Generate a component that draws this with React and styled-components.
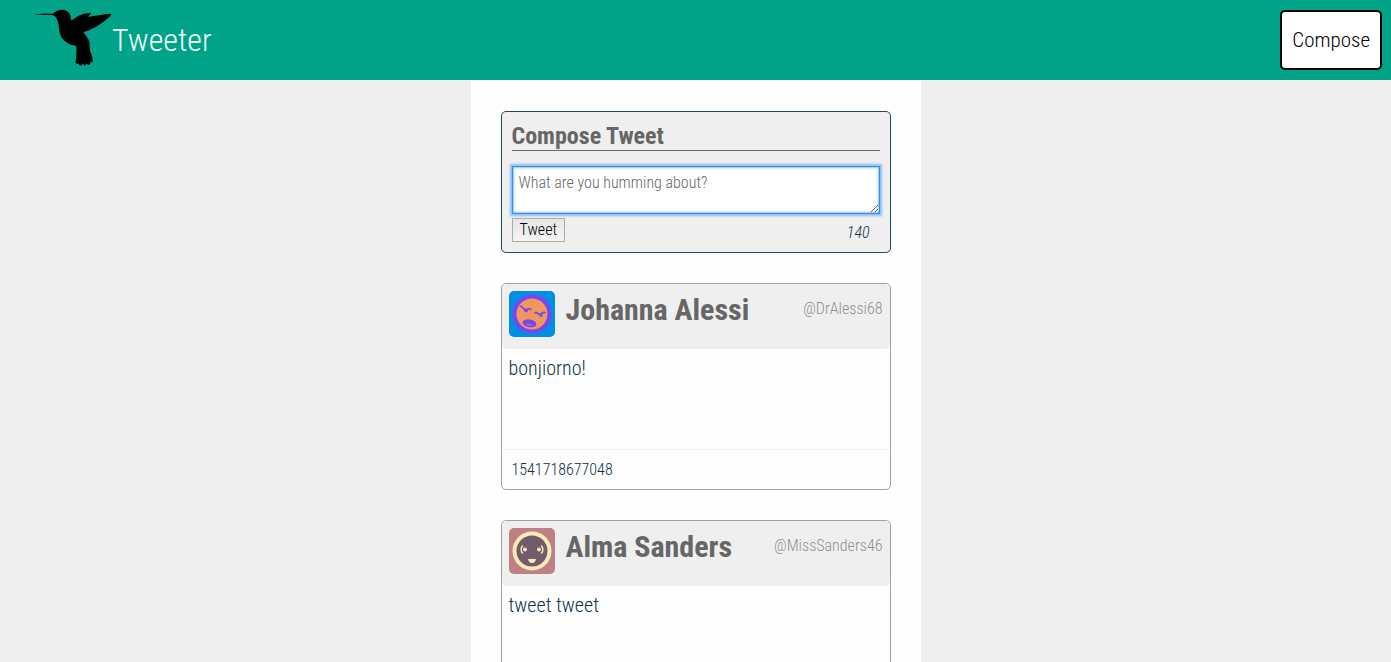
import React from "react";
import styled, { createGlobalStyle } from "styled-components";

const GlobalStyle = createGlobalStyle`
  * { box-sizing: border-box; }
  html { min-height: 100%; background: #eee; }
  body {
    margin: 0;
    color: #0c3348;
    font-family: "Roboto Condensed", "Liberation Sans Narrow", Roboto, sans-serif;
    font-weight: 300;
  }
  button, textarea { font-family: inherit; font-weight: inherit; }
`;

const NavBar = styled.header`
  display: flex;
  align-items: center;
  justify-content: space-between;
  height: 80px;
  padding: 0 9px 0 34px;
  background: #00a388;
`;

const Brand = styled.a`
  display: flex;
  align-items: center;
  color: #f0fffc;
  font-size: 32px;
  line-height: 40px;
  text-decoration: none;
`;

const Bird = styled.svg`
  display: block;
  width: 78px;
  height: 57px;
  margin-bottom: 5px;
`;

const ComposeButton = styled.button`
  height: 60px;
  padding: 0 10px;
  border: 2px solid #000;
  border-radius: 5px;
  background: #fff;
  color: #000;
  font-size: 21px;
`;

const Column = styled.main`
  max-width: 450px;
  min-height: calc(100vh - 80px);
  margin: 0 auto;
  padding: 31px 30px 0;
  background: #fefefe;
`;

const ComposePanel = styled.section`
  margin-bottom: 30px;
  padding: 10px;
  border: 1px solid #1d4b5a;
  border-radius: 5px;
  background: #efefef;
`;

const PanelTitle = styled.h2`
  margin: 0 0 15px;
  border-bottom: 1px solid #666;
  color: #666;
  font-size: 24px;
  line-height: 28px;
  font-weight: 700;
`;

const TweetInput = styled.textarea`
  display: block;
  width: 100%;
  height: 48px;
  margin-bottom: 4px;
  padding: 6px;
  border: 1px solid #3b8ee0;
  outline: none;
  box-shadow: 0 0 2px 2px #8dbff2, inset 0 0 2px 1px #8dbff2;
  background: #fff;
  font-size: 16px;
  line-height: 20px;
  resize: vertical;
  &::placeholder { color: #666; }
`;

const PanelFooter = styled.div`
  display: flex;
  justify-content: space-between;
  align-items: flex-start;
`;

const TweetButton = styled.button`
  height: 24px;
  padding: 0 7px;
  border: 1px solid #acacac;
  background: linear-gradient(#e6e6e6, #f4f4f4);
  color: #000;
  font-size: 16px;
  line-height: 20px;
`;

const Counter = styled.output`
  padding: 6px 10px 0 0;
  font-size: 16px;
  line-height: 18px;
  font-style: italic;
`;

const Card = styled.article`
  margin-bottom: 30px;
  border: 1px solid #a2a2a2;
  border-radius: 5px;
`;

const CardHeader = styled.header`
  display: flex;
  height: 65px;
  padding: 7px;
  border-radius: 5px;
  background: #efefef;
`;

const Avatar = styled.svg`
  flex: none;
  width: 46px;
  height: 46px;
  margin-right: 11px;
  border-radius: 5px;
`;

const Name = styled.h2`
  flex: 1;
  margin: 0;
  color: #666;
  font-size: 30px;
  line-height: 38px;
  font-weight: 700;
`;

const Handle = styled.span`
  color: #909090;
  font-size: 16px;
  line-height: 36px;
`;

const CardBody = styled.div`
  min-height: 100px;
  padding: 7px;
`;

const Message = styled.p`
  margin: 0;
  font-size: 20px;
  line-height: 24px;
`;

const CardFooter = styled.footer`
  padding: 10px 10px 9px;
  border-top: 1px solid #efefef;
  font-size: 16px;
  line-height: 20px;
`;

function GrumpyFace() {
  return (
    <Avatar viewBox="0 0 46 46" aria-hidden="true">
      <rect width="46" height="46" fill="#008fe3" />
      <circle cx="23" cy="23" r="17.5" fill="#f0985c" stroke="#7c43f5" strokeWidth="4" />
      <g fill="none" stroke="#7c43f5" strokeWidth="1.7" strokeLinecap="round" strokeLinejoin="round">
        <path d="M11.500 15.500c2.500-.5 2.500 2.800 4.800 3s2.700-1.500 5.500-.2" />
        <path d="M26 21.800c2.500-1 3 1.800 5 1.500s2.500-2.800 5-1.800" />
      </g>
      <g fill="#7c43f5">
        <path d="M14.500 18q3 1.500 5 .8-1 2.900-3 2.500-1.700-.5-2-3.300z" />
        <path d="M29.700 23q2.600 1.300 4.300 0-.2 3-2 3.200-1.900-.4-2.300-3.200z" />
        <ellipse cx="20.500" cy="32.300" rx="7" ry="3.900" transform="rotate(10 20.500 32.300)" />
      </g>
      <path d="M16.500 33.500q3-2.500 7.500.8-4 1.200-7.500-.8z" fill="#b4689f" />
    </Avatar>
  );
}

function SmilingFace() {
  return (
    <Avatar viewBox="0 0 46 46" aria-hidden="true">
      <rect width="46" height="46" fill="#be8082" />
      <circle cx="23" cy="23" r="17.500" fill="#745b6c" stroke="#f6e9ba" strokeWidth="4" />
      <g fill="#f6e9ba">
        <circle cx="16" cy="21.500" r="1.900" />
        <circle cx="30" cy="21.500" r="1.900" />
        <path d="M19 31h8q-.8 4-4 4t-4-4z" />
      </g>
      <g fill="none" stroke="#f6e9ba" strokeWidth="1.500">
        <path d="M13.800 17.500q-3.500 4 0 8M32.200 17.500q3.500 4 0 8" />
      </g>
    </Avatar>
  );
}

const tweets = [
  { name: "Johanna Alessi", handle: "@DrAlessi68", text: "bonjiorno!", time: "1541718677048", Face: GrumpyFace },
  { name: "Alma Sanders", handle: "@MissSanders46", text: "tweet tweet", time: "1541718677048", Face: SmilingFace },
];

export default function App() {
  return (
    <>
      <GlobalStyle />
      <NavBar>
        <Brand href="#">
          <Bird viewBox="12 12 234 171" aria-hidden="true">
            <path d="M12 28L40 26 69 26Q80 14 98 14Q112 16 119 26Q124 35 123 47Q134 40 146 32Q162 23 183 24L175 36Q195 31 242 26Q245 29 238 36Q222 52 196 67Q178 77 160 82L168 92Q178 105 179 114Q178 130 181 140Q188 154 189 168Q186 174 182 169Q182 180 176 180Q171 179 170 174Q168 183 163 181Q159 179 158 175Q155 184 151 182Q147 180 146 175Q142 180 140 175Q136 177 137 169Q140 145 139 124Q131 120 121 119Q103 110 94 96Q87 82 86 62Q84 46 78 37Q73 30 65 30L38 30Z" fill="#000" />
          </Bird>
          Tweeter
        </Brand>
        <ComposeButton type="button">Compose</ComposeButton>
      </NavBar>
      <Column>
        <ComposePanel>
          <PanelTitle id="compose-title">Compose Tweet</PanelTitle>
          <form onSubmit={(e) => e.preventDefault()}>
            <TweetInput aria-labelledby="compose-title" placeholder="What are you humming about?" />
            <PanelFooter>
              <TweetButton type="submit">Tweet</TweetButton>
              <Counter>140</Counter>
            </PanelFooter>
          </form>
        </ComposePanel>
        {tweets.map(({ name, handle, text, time, Face }) => (
          <Card key={handle}>
            <CardHeader>
              <Face />
              <Name>{name}</Name>
              <Handle>{handle}</Handle>
            </CardHeader>
            <CardBody>
              <Message>{text}</Message>
            </CardBody>
            <CardFooter>{time}</CardFooter>
          </Card>
        ))}
      </Column>
    </>
  );
}
